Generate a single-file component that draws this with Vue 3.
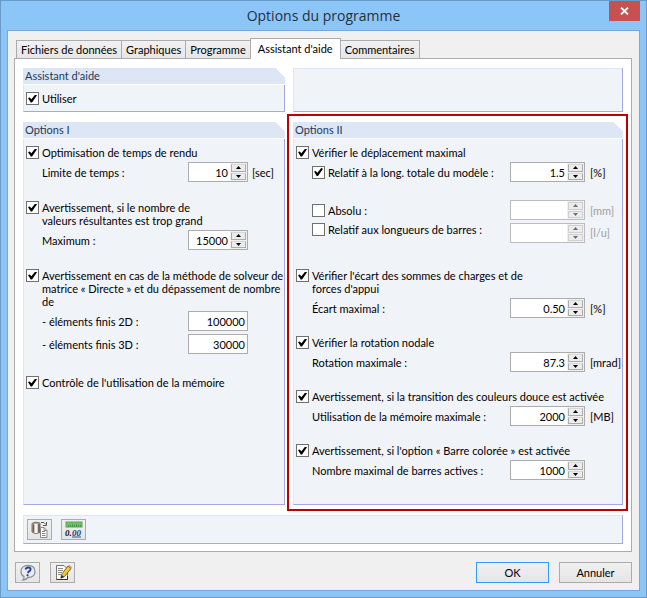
<template>
    <div class="window">
        <header class="titlebar">
            <h1>Options du programme</h1>
            <button class="close" type="button" aria-label="Fermer">
                <svg width="9" height="8" viewBox="0 0 9 8">
                    <path d="M1 0.5L8 7.5M8 0.5L1 7.5" stroke="#fff" stroke-width="1.8" fill="none" />
                </svg>
            </button>
        </header>

        <main class="body">
            <nav class="tabs" role="tablist">
                <button
                    v-for="tab in tabs"
                    :key="tab"
                    type="button"
                    role="tab"
                    class="tab"
                    :class="{active: tab === activeTab}"
                    :aria-selected="tab === activeTab"
                    @click="activeTab = tab"
                >{{ tab }}</button>
            </nav>

            <div class="page">
                <div class="columns">
                    <section class="group">
                        <h2>Assistant d'aide</h2>
                        <div class="group-content">
                            <label class="check">
                                <input v-model="enabled" type="checkbox">
                                <span>Utiliser</span>
                            </label>
                        </div>
                    </section>
                    <section class="group"></section>

                    <section
                        v-for="group in groups"
                        :key="group.id"
                        class="group options"
                        :class="group.id"
                    >
                        <h2>{{ group.title }}</h2>
                        <div class="group-content">
                            <div
                                v-for="(option, i) in group.options"
                                :key="i"
                                class="option"
                                :class="{loose: option.loose}"
                            >
                                <label class="check">
                                    <input v-model="option.checked" type="checkbox">
                                    <span>{{ option.label }}</span>
                                </label>
                                <div
                                    v-for="(row, j) in option.rows"
                                    :key="j"
                                    class="row"
                                    :class="{spaced: row.spaced, top: row.top}"
                                >
                                    <label v-if="'checked' in row" class="check">
                                        <input v-model="row.checked" type="checkbox">
                                        <span>{{ row.label }}</span>
                                    </label>
                                    <label v-else class="name" :for="`${group.id}-${i}-${j}`">{{ row.label }}</label>

                                    <div class="field" :class="{disabled: row.checked === false}">
                                        <input
                                            :id="`${group.id}-${i}-${j}`"
                                            v-model="row.value"
                                            type="text"
                                            :aria-label="row.label"
                                            :disabled="row.checked === false"
                                        >
                                        <div v-if="!row.plain" class="spinner">
                                            <button type="button" aria-label="Augmenter" :disabled="row.checked === false">
                                                <svg width="5" height="3" viewBox="0 0 5 3"><path d="M0 3L2.5 0L5 3Z" fill="currentColor" /></svg>
                                            </button>
                                            <button type="button" aria-label="Diminuer" :disabled="row.checked === false">
                                                <svg width="5" height="3" viewBox="0 0 5 3"><path d="M0 0L2.5 3L5 0Z" fill="currentColor" /></svg>
                                            </button>
                                        </div>
                                    </div>
                                    <span class="unit" :class="{muted: row.checked === false}">{{ row.unit }}</span>
                                </div>
                            </div>
                        </div>
                    </section>
                </div>

                <div class="group toolbar">
                    <button class="icon" type="button" aria-label="Copier">
                        <svg width="18" height="17" viewBox="0 0 18 17">
                            <path d="M1 2.500Q4 0 9 2V11.500Q4 14 1 11Z" fill="#b3a598" stroke="#7a736c" />
                            <path d="M2.500 3.500V11" stroke="#6b6058" stroke-width="1.500" />
                            <path d="M5 3V12" stroke="#f8f4ee" stroke-width="3" />
                            <path d="M8 3V11.500" stroke="#6a5a4e" stroke-width="1.500" />
                            <path d="M10 1.500H13L15 3.500M15.500 1V4.500H12" fill="none" stroke="#555" />
                            <path d="M9.500 6.500H13L16 9.500V16.500H9.500Z" fill="#fff" stroke="#888" />
                            <path d="M13 6.500V9.500H16M11 10.500H14M11 12.500H14.500M11 14.500H14.500" fill="none" stroke="#888" />
                        </svg>
                    </button>
                    <button class="icon" type="button" aria-label="Unités et décimales">
                        <svg width="18" height="17" viewBox="0 0 18 17">
                            <rect x="1" y="1" width="16" height="5" fill="#6cc067" stroke="#5aa858" />
                            <path d="M3.500 4V6M5.500 4V6M7.500 3V6M9.500 4V6M11.500 3V6M13.500 4V6M15.500 4V6" stroke="#4d9b4b" />
                            <text x="0" y="15" class="digits" fill="#111">0.</text>
                            <text x="7" y="15" class="digits" fill="#233a86">00</text>
                            <path d="M7 16H16" stroke="#35509b" />
                        </svg>
                    </button>
                </div>
            </div>

            <footer class="footer">
                <button class="icon" type="button" aria-label="Aide">
                    <svg width="18" height="17" viewBox="0 0 18 17">
                        <path d="M9 1.500C13.500 1.500 16 4 16 7.500C16 11 13.500 13.500 9 13.500C8 14.800 6.500 15.800 4 16C5 15 5.200 14 5 12.700C3 11.700 2 10 2 7.500C2 4 4.500 1.500 9 1.500Z" fill="#e9edf3" stroke="#8d939d" stroke-width="1.300" />
                        <path d="M6.500 5.500Q7 3.500 9.500 3.500Q12 3.500 11.500 5.700Q11.200 7 9.500 7.700L9 9.200" fill="none" stroke="#24418f" stroke-width="1.900" />
                        <circle cx="8.500" cy="11.300" r="1.100" fill="#24418f" />
                    </svg>
                </button>
                <button class="icon" type="button" aria-label="Commentaire">
                    <svg width="18" height="17" viewBox="0 0 18 17">
                        <path d="M2.500 1.500H10L13.500 5V15.500H2.500Z" fill="#fafafa" stroke="#777" />
                        <path d="M2.500 15.500H13.500V12" fill="none" stroke="#333" />
                        <path d="M4 4.500H9M4 6.500H9M4 8.500H8M4 10.500H7" stroke="#888" />
                        <path d="M7.500 10.500L14 2L17 4.500L10.500 12.500L7 14Z" fill="#f2cf2e" stroke="#54450f" stroke-width="0.800" />
                        <path d="M14 2L15 0.800L18 3.200L17 4.500Z" fill="#d58d86" />
                        <path d="M8 11L10 13L6.500 14.500Z" fill="#222" />
                    </svg>
                </button>
                <span class="fill"></span>
                <button class="action default" type="button">OK</button>
                <button class="action" type="button">Annuler</button>
            </footer>
        </main>
    </div>
</template>


<script setup>

import {reactive, ref} from "vue";

const tabs = ["Fichiers de données", "Graphiques", "Programme", "Assistant d'aide", "Commentaires"];
const activeTab = ref("Assistant d'aide");
const enabled = ref(true);

const groups = reactive([
    {
        id: "first",
        title: "Options I",
        options: [
            {
                label: "Optimisation de temps de rendu",
                checked: true,
                rows: [{label: "Limite de temps :", value: "10", unit: "[sec]"}]
            },
            {
                label: "Avertissement, si le nombre de\nvaleurs résultantes est trop grand",
                checked: true,
                rows: [{label: "Maximum :", value: "15000"}]
            },
            {
                label: "Avertissement en cas de la méthode de solveur de\nmatrice « Directe » et du dépassement de nombre\nde",
                checked: true,
                loose: true,
                rows: [
                    {label: "- éléments finis 2D :", value: "100000", plain: true},
                    {label: "- éléments finis 3D :", value: "30000", plain: true}
                ]
            },
            {
                label: "Contrôle de l'utilisation de la mémoire",
                checked: true,
                rows: []
            }
        ]
    },
    {
        id: "second",
        title: "Options II",
        options: [
            {
                label: "Vérifier le déplacement maximal",
                checked: true,
                loose: true,
                rows: [
                    {label: "Relatif à la long. totale du modèle :", checked: true, value: "1.5", unit: "[%]"},
                    {label: "Absolu :", checked: false, value: "", unit: "[mm]", spaced: true},
                    {label: "Relatif aux longueurs de barres :", checked: false, value: "", unit: "[l/u]", top: true}
                ]
            },
            {
                label: "Vérifier l'écart des sommes de charges et de\nforces d'appui",
                checked: true,
                rows: [{label: "Écart maximal :", value: "0.50", unit: "[%]"}]
            },
            {
                label: "Vérifier la rotation nodale",
                checked: true,
                rows: [{label: "Rotation maximale :", value: "87.3", unit: "[mrad]"}]
            },
            {
                label: "Avertissement, si la transition des couleurs douce est activée",
                checked: true,
                rows: [{label: "Utilisation de la mémoire maximale :", value: "2000", unit: "[MB]"}]
            },
            {
                label: "Avertissement, si l'option « Barre colorée » est activée",
                checked: true,
                rows: [{label: "Nombre maximal de barres actives :", value: "1000"}]
            }
        ]
    }
])

</script>


<style>

body {
    margin: 0;
}

</style>


<style scoped>

* {
    box-sizing: border-box;
}

.window {
    --border: #acacac;
    --edge: #a5a6e6;

    display: flex;
    flex-direction: column;
    min-height: 100vh;
    padding: 0 6px 6px;
    border: 1px solid #6c9ac6;
    background: #8cc6f9;
    color: #000;
    font: 11px/13px Lato, "Liberation Sans", Arial, sans-serif;
}

button,
input {
    margin: 0;
    padding: 0;
    font: inherit;
    color: inherit;
}

.titlebar {
    display: grid;
    grid-template-columns: 31px 1fr 31px;
    height: 29px;
}

h1 {
    grid-column: 2;
    margin: 0;
    font: 14px/30px "Open Sans", sans-serif;
    text-align: center;
    color: #24303c;
}

.close {
    display: grid;
    place-items: center;
    height: 20px;
    border: 0;
    background: #c75050;
}

.body {
    flex: 1;
    display: flex;
    flex-direction: column;
    padding: 7px 7px 7px 6px;
    border: 1px solid #76a9d8;
    background: #f0f0f0;
}

.tabs {
    display: flex;
    align-items: flex-end;
    padding-left: 2px;
}

.tab {
    height: 18px;
    margin-right: -1px;
    padding: 0 4px;
    border: 1px solid var(--border);
    border-bottom: 0;
    background: linear-gradient(#f1f1f1, #e6e6e6);
    white-space: nowrap;
}

.tab.active {
    position: relative;
    height: 21px;
    margin-bottom: -1px;
    padding: 0 7px 2px;
    background: #fff;
}

.page {
    flex: 1;
    display: flex;
    flex-direction: column;
    gap: 10px;
    padding: 9px 8px 7px;
    border: 1px solid var(--border);
    background: #fff;
}

.columns {
    flex: 1;
    display: grid;
    grid-template-columns: minmax(0, 262fr) minmax(0, 330fr);
    grid-template-rows: auto 1fr;
    gap: 10px 8px;
}

.group {
    position: relative;
    border: 1px solid #dce6f4;
    border-right-color: var(--edge);
    border-bottom-color: var(--edge);
    background: #f0f3f8;
}

h2 {
    margin: -1px -1px 0;
    height: 17px;
    padding-left: 2px;
    border-bottom: 1px solid #fff;
    background: linear-gradient(225deg, #fff 7px, #dce6f4 7px);
    font: inherit;
    line-height: 16px;
    color: #1e395b;
}

.group-content {
    padding: 7px 0 6px 2px;
}

.options .group-content {
    padding: 7px 0 24px 2px;
}

.second::after {
    content: "";
    position: absolute;
    inset: -9px -6px -7px -7px;
    border: 2px solid #c00000;
    pointer-events: none;
}

.option + .option {
    margin-top: 18px;
}

.first .option + .option {
    margin-top: 19px;
}

.first .option.loose + .option {
    margin-top: 22px;
}

.second .option.loose + .option {
    margin-top: 26px;
}

.check {
    display: flex;
    gap: 3px;
    white-space: pre;
}

.check input {
    appearance: none;
    flex: none;
    display: grid;
    place-items: center;
    width: 13px;
    height: 13px;
    border: 1px solid #707070;
    background: #fff;
}

.check input:checked::before {
    content: "";
    width: 9px;
    height: 8px;
    background: #000;
    clip-path: polygon(0 45%, 18% 38%, 38% 60%, 80% 0, 100% 8%, 45% 100%, 30% 100%);
}

.row {
    display: flex;
    align-items: center;
    margin: 3px 0 0 16px;
}

.row.spaced {
    margin-top: 18px;
}

.row.top {
    align-items: flex-start;
}

.row .check,
.name {
    flex: 1;
    white-space: nowrap;
}

.field {
    display: flex;
    width: 60px;
    height: 20px;
    border: 1px solid var(--border);
    background: #fff;
}

.second .field {
    width: 75px;
}

.field input {
    flex: 1;
    min-width: 0;
    padding-right: 2px;
    border: 0;
    background: none;
    text-align: right;
}

.spinner {
    display: grid;
    gap: 1px;
    width: 17px;
    padding: 1px;
    background: #f0f0f0;
}

.spinner button {
    display: grid;
    place-items: center;
    border: 1px solid var(--border);
    border-top-color: #d8d8d8;
    background: #ececec;
}

.disabled {
    border-color: #bcbcbc;
}

.disabled .spinner button {
    border-color: #d0d0d0;
    color: #6d6d6d;
}

.unit {
    width: 37px;
    padding-left: 5px;
    white-space: nowrap;
}

.first .unit {
    width: 36px;
    padding-left: 4px;
}

.muted {
    color: #a0a0a0;
}

.row.top .unit {
    line-height: 20px;
}

.toolbar {
    display: flex;
    gap: 9px;
    padding: 3px;
}

.icon {
    display: grid;
    place-items: center;
    width: 25px;
    height: 21px;
    border: 1px solid var(--border);
    background: linear-gradient(#f0f0f0, #e5e5e5);
}

.digits {
    font: italic bold 9px "Liberation Serif", serif;
}

.footer {
    display: flex;
    gap: 10px;
    padding: 10px 0 0 1px;
}

.fill {
    flex: 1;
}

.action {
    width: 73px;
    height: 21px;
    border: 1px solid var(--border);
    background: linear-gradient(#f0f0f0, #e5e5e5);
}

.action.default {
    border-color: #3399ff;
}

</style>
